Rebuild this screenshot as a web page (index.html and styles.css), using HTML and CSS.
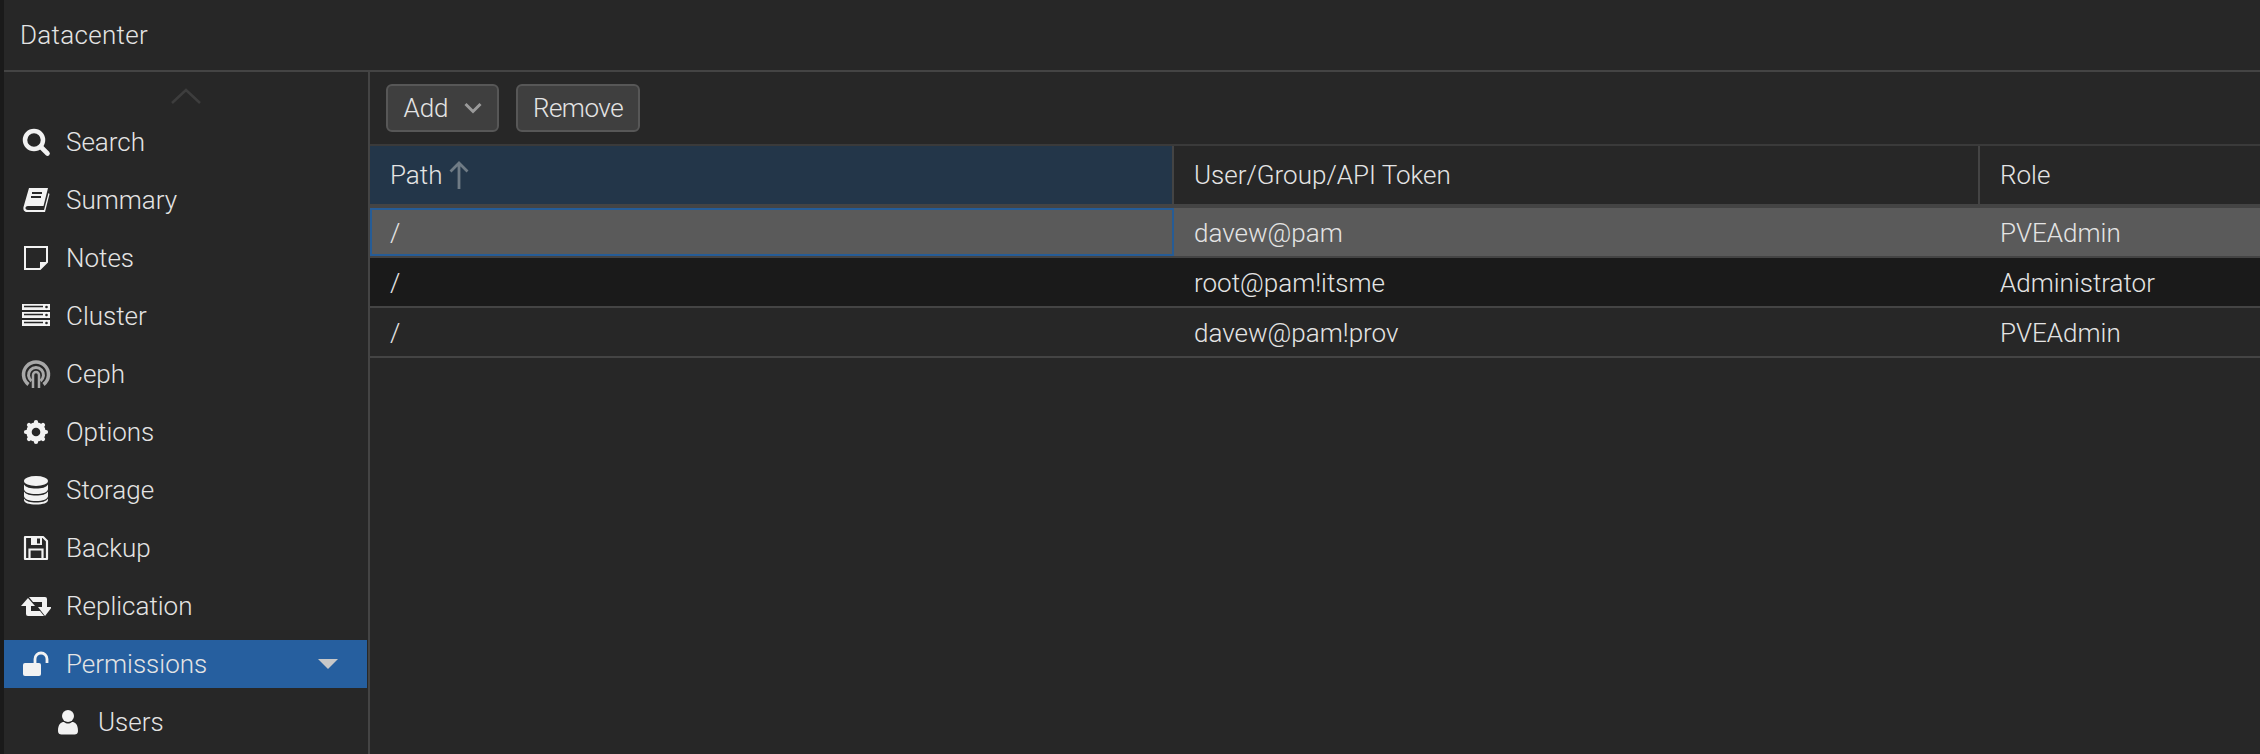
FILE: index.html
```html
<!DOCTYPE html>
<html lang="en">
<head>
    <meta charset="UTF-8">
    <title>Datacenter - Permissions</title>
    <link rel="stylesheet" href="styles.css">
</head>
<body>
<div id="container">
    <div id="header">Datacenter</div>
    <div id="body">
        <div id="sidebar">
            <svg class="scroll-up" width="30" height="16" viewBox="0 0 30 16"><path d="M1 15 15 2l14 13" fill="none" stroke="#3d3d3d" stroke-width="2.5"/></svg>
            <div class="nav-item">
                <svg class="nav-icon" viewBox="0 0 30 30"><circle cx="13" cy="13" r="9" fill="none" stroke="currentColor" stroke-width="4.5"/><path d="m20 20 6.500 6.500" stroke="currentColor" stroke-width="4.600" stroke-linecap="round"/></svg>
                <span>Search</span>
            </div>
            <div class="nav-item">
                <svg class="nav-icon" viewBox="0 0 30 30"><path d="M8 3h19l-4.500 18H7c-2 0-2.500 1.200-2.500 2S5 25 7 25h16l4.500-17 1 1L24 27H6c-3 0-4-2.500-3.500-5z" fill="currentColor"/><path d="M11 8h10M10 12h10" stroke="#272727" stroke-width="2"/></svg>
                <span>Summary</span>
            </div>
            <div class="nav-item">
                <svg class="nav-icon" viewBox="0 0 30 30"><path d="M4 4h22v15l-7 7H4z" fill="none" stroke="currentColor" stroke-width="2"/><path d="M19 26v-7h7z" fill="currentColor"/></svg>
                <span>Notes</span>
            </div>
            <div class="nav-item">
                <svg class="nav-icon" viewBox="0 0 30 30"><path d="M1 3h28v6H1zM1 11h28v6H1zM1 19h28v6H1z" fill="currentColor"/><path d="M3 5.500h19M3 13.500h19M3 21.500h19" stroke="#272727" stroke-width="1.500"/><circle cx="25.500" cy="6" r="1.300" fill="#272727"/><circle cx="25.500" cy="14" r="1.300" fill="#272727"/><circle cx="25.500" cy="22" r="1.300" fill="#272727"/></svg>
                <span>Cluster</span>
            </div>
            <div class="nav-item">
                <svg class="nav-icon" viewBox="0 0 30 30" fill="none" stroke="#a8a8a8"><path d="M7.500 25.500a12.500 12.500 0 1 1 15 0" stroke-width="3.500"/><path d="M10.500 22a7.500 7.500 0 1 1 9 0" stroke-width="3"/><path d="M12 29V16a3 3 0 0 1 6 0v13" stroke-width="2.500"/></svg>
                <span>Ceph</span>
            </div>
            <div class="nav-item">
                <svg class="nav-icon" viewBox="0 0 30 30"><circle cx="15" cy="15" r="7" fill="none" stroke="currentColor" stroke-width="5.500"/><path d="M15 5v20M5 15h20M8 8l14 14M22 8 8 22" stroke="currentColor" stroke-width="4.200" stroke-linecap="round"/><circle cx="15" cy="15" r="4.300" fill="#272727"/></svg>
                <span>Options</span>
            </div>
            <div class="nav-item">
                <svg class="nav-icon" viewBox="0 0 30 30"><ellipse cx="15" cy="6" rx="12" ry="5" fill="currentColor"/><path d="M3 9.500c2 3 6 4 12 4s10-1 12-4v4.500c0 3-5 5-12 5s-12-2-12-5zM3 16.500c2 3 6 4 12 4s10-1 12-4V21c0 3-5 5-12 5S3 24 3 21z" fill="currentColor"/><path d="M3 23.500c2 3 6 4 12 4s10-1 12-4v1.500c0 3-5 4.500-12 4.500S3 28 3 25z" fill="currentColor"/></svg>
                <span>Storage</span>
            </div>
            <div class="nav-item">
                <svg class="nav-icon" viewBox="0 0 30 30"><path d="M4 4h18l4 4v18H4z" fill="none" stroke="currentColor" stroke-width="2.200" stroke-linejoin="round"/><path d="M10 4h11v8H10z" fill="currentColor"/><path d="M16 5.500h3v5h-3z" fill="#272727"/><path d="M8.500 26v-9.500h13V26" fill="none" stroke="currentColor" stroke-width="2.200"/></svg>
                <span>Backup</span>
            </div>
            <div class="nav-item">
                <svg class="nav-icon" viewBox="0 0 30 30"><path d="M0 15l7-8 7 8h-4v5h9l4 5H7a2 2 0 0 1-2-2v-8zM31 16l-7 9-7-9h4v-5h-9l-4-5h16a2 2 0 0 1 2 2v8z" fill="currentColor"/></svg>
                <span>Replication</span>
            </div>
            <div class="nav-item active">
                <svg class="nav-icon" viewBox="0 0 30 30"><rect x="2" y="14" width="18" height="13" rx="2" fill="currentColor"/><path d="M14 14V10a6 6 0 0 1 12 0v4" fill="none" stroke="currentColor" stroke-width="2.800"/></svg>
                <span>Permissions</span>
                <i class="nav-arrow"></i>
            </div>
            <div class="nav-item sub">
                <svg class="nav-icon" viewBox="0 0 30 30"><circle cx="15" cy="9" r="6" fill="currentColor"/><path d="M5 24c0-7 3-9 6-9 1.500 1 2.500 1.500 4 1.500s2.500-.5 4-1.500c3 0 6 2 6 9 0 2.500-1.500 3.500-3.500 3.500h-13C6.500 27.500 5 26.500 5 24z" fill="currentColor"/></svg>
                <span>Users</span>
            </div>
        </div>
        <div id="content">
            <div class="toolbar">
                <div class="button add">Add
                    <svg width="18" height="12" viewBox="0 0 18 12"><path d="m1.500 2 7.500 7.500L16.500 2" fill="none" stroke="#9a9a9a" stroke-width="3"/></svg>
                </div>
                <div class="button remove">Remove</div>
            </div>
            <div class="grid-row grid-head">
                <div class="cell sorted">Path
                    <svg width="20" height="30" viewBox="0 0 20 30"><path d="M10 29V3M1.500 11.500 10 3l8.500 8.500" fill="none" stroke="#6f7b85" stroke-width="2.800"/></svg>
                </div>
                <div class="cell">User/Group/API Token</div>
                <div class="cell">Role</div>
            </div>
            <div class="grid-row selected">
                <div class="cell focused">/</div>
                <div class="cell">davew@pam</div>
                <div class="cell">PVEAdmin</div>
            </div>
            <div class="grid-row alt">
                <div class="cell">/</div>
                <div class="cell">root@pam!itsme</div>
                <div class="cell">Administrator</div>
            </div>
            <div class="grid-row">
                <div class="cell">/</div>
                <div class="cell">davew@pam!prov</div>
                <div class="cell">PVEAdmin</div>
            </div>
        </div>
    </div>
</div>
</body>
</html>
```

FILE: styles.css
```css
html, body {
    margin: 0;
    height: 100%;
    overflow: hidden;
}

body {
    background-color: #1a1a1a;
    color: #e4e4e4;
    font-family: "Roboto", "Liberation Sans", sans-serif;
    font-weight: 300;
    font-size: 26px;
}

#container {
    display: flex;
    flex-direction: column;
    height: 100%;
    margin-left: 4px;
    background-color: #272727;
}

#header {
    display: flex;
    align-items: center;
    height: 70px;
    padding-left: 16px;
    letter-spacing: .3px;
    border-bottom: 2px solid #444;
}

#body {
    display: flex;
    flex: 1;
    min-height: 0;
}

#sidebar {
    display: flex;
    flex-direction: column;
    gap: 10px;
    width: 364px;
    padding-top: 16px;
    border-right: 2px solid #444;
}

.scroll-up {
    align-self: center;
    margin-bottom: 4px;
}

.nav-item {
    display: flex;
    align-items: center;
    gap: 15px;
    height: 48px;
    margin-right: 1px;
    padding-left: 17px;
}

.nav-icon {
    width: 30px;
    height: 30px;
    color: #f2f2f2;
}

.nav-item.sub {
    padding-left: 49px;
}

.nav-item.active {
    background-color: #265f9f;
}

.nav-arrow {
    width: 0;
    height: 0;
    margin-left: auto;
    margin-right: 29px;
    border-left: 10px solid transparent;
    border-right: 10px solid transparent;
    border-top: 10px solid #c8c8c8;
}

#content {
    flex: 1;
    min-width: 0;
}

.toolbar {
    display: flex;
    align-items: center;
    gap: 17px;
    height: 72px;
    padding-left: 16px;
}

.button {
    display: flex;
    align-items: center;
    justify-content: center;
    gap: 15px;
    height: 48px;
    box-sizing: border-box;
    background-color: #3f3f3f;
    border: 2px solid #575757;
    border-radius: 6px;
}

.add {
    width: 113px;
}

.remove {
    width: 124px;
    letter-spacing: -.5px;
}

.grid-row {
    display: grid;
    grid-template-columns: 804px 806px 1fr;
    height: 48px;
    border-bottom: 2px solid #444;
}

.cell {
    display: flex;
    align-items: center;
    gap: 7px;
    box-sizing: border-box;
    padding-left: 20px;
    padding-top: 1px;
}

.grid-head {
    height: 58px;
    border-top: 2px solid #3a3a3a;
    border-bottom: 4px solid #444;
}

.grid-head .cell {
    padding-top: 0;
    border-right: 2px solid #444;
}

.grid-head .cell:last-child {
    border-right: 0;
}

.grid-head .sorted {
    background-color: #233649;
}

.selected {
    background-color: #5a5a5a;
}

.focused {
    border: 2px solid #265c96;
    padding-left: 18px;
}

.alt {
    background-color: #1a1a1a;
}
```
